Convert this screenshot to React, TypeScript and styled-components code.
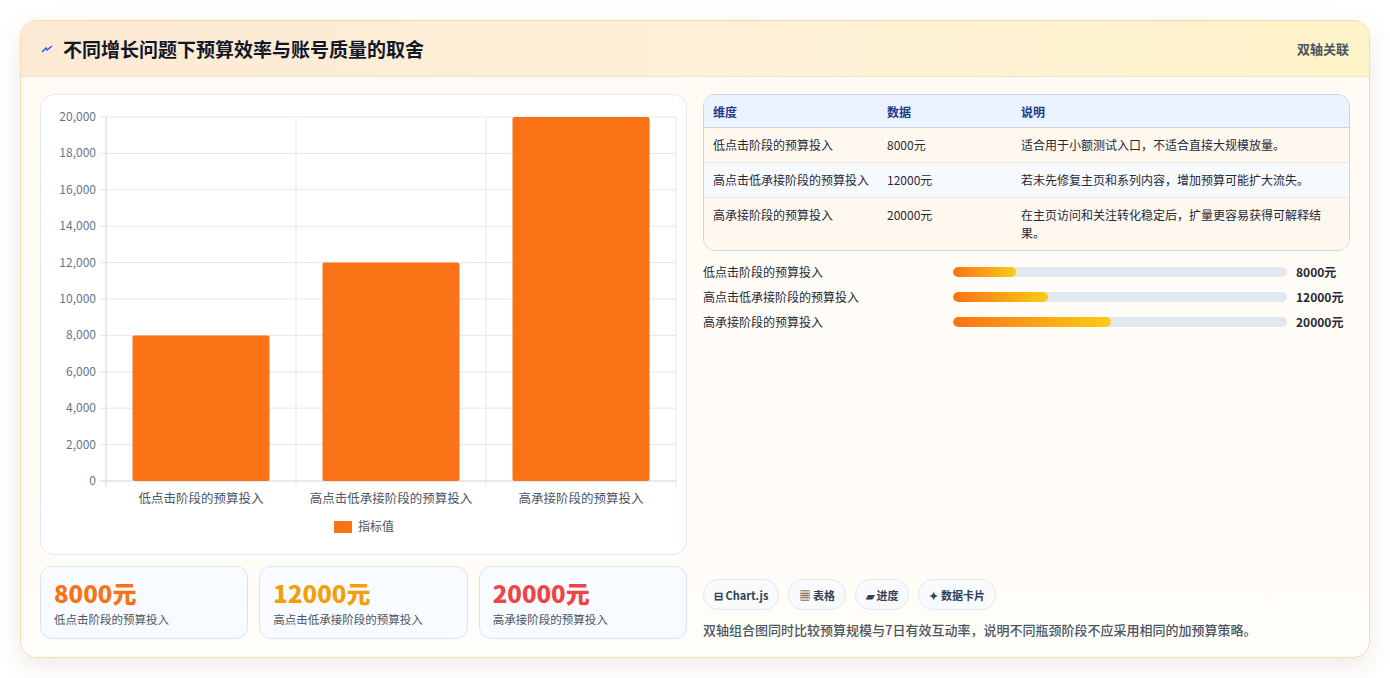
import React from 'react';
import styled, { createGlobalStyle } from 'styled-components';

const Global = createGlobalStyle`
  html, body { margin: 0; background: #ffffff; }
  body { font-family: "Noto Sans CJK SC", "Noto Sans", sans-serif; color: #1f2937; }
`;

const Page = styled.div`
  padding: 20px;
  width: 1350px;
`;

const Card = styled.section`
  border: 1px solid #f7dcb0;
  border-radius: 16px;
  background: linear-gradient(180deg, #fffaf3 0%, #fffdf9 100%);
  box-shadow: 0 8px 24px rgba(120, 90, 40, 0.12);
  overflow: hidden;
`;

const Header = styled.header`
  height: 55px;
  display: flex;
  align-items: center;
  justify-content: space-between;
  padding: 0 20px;
  background: linear-gradient(90deg, #fdead5 0%, #fdf1d6 60%, #fdf3c8 100%);
  border-bottom: 1px solid #f4e4cd;
`;

const Title = styled.h1`
  margin: 0;
  font-size: 19px;
  font-weight: 700;
  color: #111827;
  display: flex;
  align-items: center;
  gap: 10px;
`;

const Tag = styled.span`
  font-size: 13px;
  font-weight: 600;
  color: #4b5563;
`;

const Body = styled.div`
  display: grid;
  grid-template-columns: 647px 647px;
  gap: 16px;
  padding: 17px 19px 18px;
`;

const LeftCol = styled.div`
  display: flex;
  flex-direction: column;
  gap: 11px;
`;

const ChartPanel = styled.div`
  height: 461px;
  border: 1px solid #e2e8f0;
  border-radius: 14px;
  background: #fff;
  box-sizing: border-box;
`;

const Stats = styled.div`
  display: grid;
  grid-template-columns: repeat(3, 1fr);
  gap: 11px;
`;

const Stat = styled.div`
  height: 73px;
  box-sizing: border-box;
  border: 1px solid #dbe4ef;
  border-radius: 12px;
  background: #f8fbff;
  padding: 10px 13px;
`;

const StatValue = styled.div<{ $color: string }>`
  font-size: 24px;
  font-weight: 800;
  color: ${p => p.$color};
  line-height: 32px;
`;

const StatLabel = styled.div`
  font-size: 11.5px;
  color: #4b5563;
  margin-top: 2px;
`;

const RightCol = styled.div`
  display: flex;
  flex-direction: column;
`;

const Table = styled.table`
  width: 100%;
  border-collapse: separate;
  border-spacing: 0;
  border: 1px solid #cbd5e1;
  border-radius: 12px;
  overflow: hidden;
  font-size: 12px;
`;

const Th = styled.th<{ $w?: number }>`
  text-align: left;
  font-weight: 700;
  color: #1e3a8a;
  background: #eaf3fe;
  height: 32px;
  padding: 0 9px;
  width: ${p => (p.$w ? `${p.$w}px` : 'auto')};
  border-bottom: 1px solid #cbd5e1;
`;

const Tr = styled.tr<{ $alt?: boolean }>`
  background: ${p => (p.$alt ? '#f7fafd' : '#fff8ef')};
  td { border-bottom: 1px solid #e5e7eb; }
  &:last-child td { border-bottom: none; }
`;

const Td = styled.td`
  padding: 8px 9px;
  line-height: 18px;
  color: #1f2937;
  vertical-align: top;
`;

const Bars = styled.div`
  display: flex;
  flex-direction: column;
  gap: 8px;
  margin-top: 12px;
`;

const BarRow = styled.div`
  display: grid;
  grid-template-columns: 241px 334px auto;
  align-items: center;
  gap: 9px;
  font-size: 12px;
  height: 17px;
`;

const Track = styled.div`
  height: 10px;
  border-radius: 5px;
  background: #e2e8f0;
  overflow: hidden;
`;

const Fill = styled.div`
  height: 100%;
  border-radius: 5px;
  background: linear-gradient(90deg, #f97316, #facc15);
`;

const BarValue = styled.span`
  font-weight: 700;
`;

const Footer = styled.div`
  margin-top: auto;
`;

const Chips = styled.div`
  display: flex;
  gap: 9px;
`;

const Chip = styled.span`
  height: 29px;
  padding: 0 10px;
  border: 1px solid #e2e8f0;
  border-radius: 15px;
  background: #f8fafc;
  display: inline-flex;
  align-items: center;
  gap: 4px;
  font-size: 11px;
  font-weight: 600;
  color: #334155;
`;

const Note = styled.p`
  margin: 10px 0 0;
  font-size: 13px;
  font-weight: 500;
  color: #4b5563;
`;

const items = [
  { label: '低点击阶段的预算投入', value: 8000, color: '#f97316', note: '适合用于小额测试入口，不适合直接大规模放量。' },
  { label: '高点击低承接阶段的预算投入', value: 12000, color: '#f59e0b', note: '若未先修复主页和系列内容，增加预算可能扩大流失。' },
  { label: '高承接阶段的预算投入', value: 20000, color: '#ef4444', note: '在主页访问和关注转化稳定后，扩量更容易获得可解释结果。' },
];

const BarChart = () => {
  const left = 65, top = 22, w = 570, h = 364;
  const ticks = [0, 2000, 4000, 6000, 8000, 10000, 12000, 14000, 16000, 18000, 20000];
  const y = (v: number) => top + h - (v / 20000) * h;
  const cw = w / 3;
  return (
    <svg width="645" height="459" fontFamily="'Noto Sans CJK SC', sans-serif">
      {ticks.map(t => (
        <g key={t}>
          <line x1={left - 6} x2={left + w} y1={y(t)} y2={y(t)} stroke={t === 0 ? '#cbd5e1' : '#e5e7eb'} />
          <text x={left - 10} y={y(t) + 4} fontSize="12" fill="#64748b" textAnchor="end">{t.toLocaleString('en-US')}</text>
        </g>
      ))}
      {[0, 1, 2, 3].map(i => (
        <line key={i} x1={left + i * cw} x2={left + i * cw} y1={top} y2={top + h + 6} stroke={i === 0 ? '#cbd5e1' : '#e5e7eb'} />
      ))}
      {items.map((it, i) => (
        <g key={it.label}>
          <rect x={left + i * cw + 26.5} y={y(it.value)} width="137" height={top + h - y(it.value)} rx="2" fill="#f97316" />
          <text x={left + i * cw + cw / 2} y={top + h + 22} fontSize="12.5" fill="#4b5563" textAnchor="middle">{it.label}</text>
        </g>
      ))}
      <rect x="293" y="426" width="18" height="12" fill="#f97316" />
      <text x="317" y="436" fontSize="12" fill="#4b5563">指标值</text>
    </svg>
  );
};

export default function App() {
  return (
    <Page>
      <Global />
      <Card>
        <Header>
          <Title>
            <svg width="12" height="12" viewBox="0 0 12 12"><path d="M1 9 L5 5 L6 7 L11 3" stroke="#2563eb" strokeWidth="1.5" fill="none" /></svg>
            不同增长问题下预算效率与账号质量的取舍
          </Title>
          <Tag>双轴关联</Tag>
        </Header>
        <Body>
          <LeftCol>
            <ChartPanel><BarChart /></ChartPanel>
            <Stats>
              {items.map(it => (
                <Stat key={it.label}>
                  <StatValue $color={it.color}>{it.value}元</StatValue>
                  <StatLabel>{it.label}</StatLabel>
                </Stat>
              ))}
            </Stats>
          </LeftCol>
          <RightCol>
            <Table>
              <thead>
                <tr><Th $w={156}>维度</Th><Th $w={116}>数据</Th><Th>说明</Th></tr>
              </thead>
              <tbody>
                {items.map((it, i) => (
                  <Tr key={it.label} $alt={i === 1}>
                    <Td>{it.label}</Td><Td>{it.value}元</Td><Td>{it.note}</Td>
                  </Tr>
                ))}
              </tbody>
            </Table>
            <Bars>
              {items.map(it => (
                <BarRow key={it.label}>
                  <span>{it.label}</span>
                  <Track><Fill style={{ width: `${(it.value / 42300) * 100}%` }} /></Track>
                  <BarValue>{it.value}元</BarValue>
                </BarRow>
              ))}
            </Bars>
            <Footer>
              <Chips>
                <Chip>⊟ Chart.js</Chip>
                <Chip>▦ 表格</Chip>
                <Chip>▰ 进度</Chip>
                <Chip>✦ 数据卡片</Chip>
              </Chips>
              <Note>双轴组合图同时比较预算规模与7日有效互动率，说明不同瓶颈阶段不应采用相同的加预算策略。</Note>
            </Footer>
          </RightCol>
        </Body>
      </Card>
    </Page>
  );
}
